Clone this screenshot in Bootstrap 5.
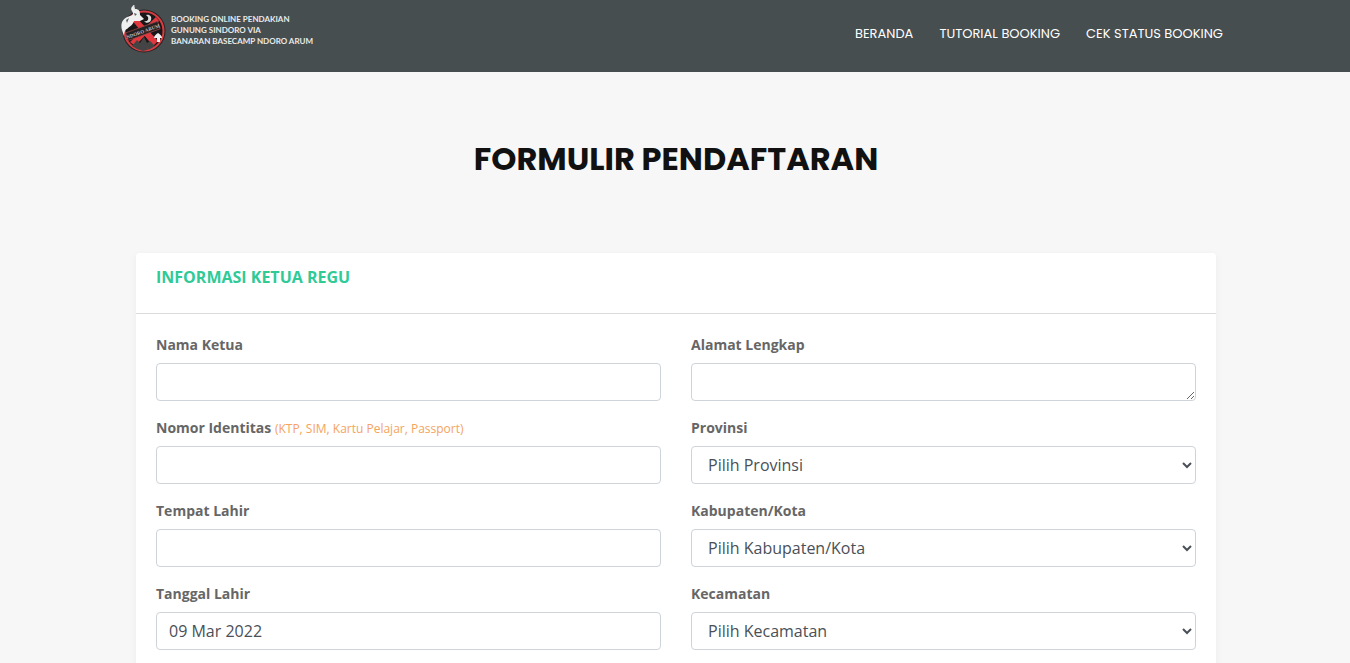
<!DOCTYPE html>
<html lang="id">
<head>
<meta charset="utf-8">
<meta name="viewport" content="width=device-width, initial-scale=1">
<title>Formulir Pendaftaran</title>
<link href="https://cdn.jsdelivr.net/npm/bootstrap@5.3.0/dist/css/bootstrap.min.css" rel="stylesheet">
<style>
  body { background: #f7f7f7; font-family: "Open Sans", sans-serif; color: #666; }
  .site-wrap { max-width: 1140px; padding-inline: 16px 14px; }
  .topbar { background: #464e50; height: 72px; }
  .brand-text { font: 700 8px/11px Lato, sans-serif; color: #e9eaea; margin: 14px 0 0 3px; }
  .main-menu { gap: 26px; padding: 24px 8px 0 0; }
  .main-menu a { font: 400 13px/20px Poppins, Inter, sans-serif; color: #fff; text-decoration: none; }
  .page-title { font: 700 32px/40px Poppins, Inter, sans-serif; color: #111; padding: 67px 0 74px; }
  .form-card { border: 0; border-radius: 4px; margin-inline: 15px; box-shadow: 0 2px 8px rgba(0,0,0,.05); }
  .form-card .card-header { background: #fff; border-color: #dadcde; padding: 12px 20px 24px; }
  .form-card h2 { font-size: 16px; line-height: 24px; font-weight: 700; color: #2fca96; }
  .form-card .card-body { padding: 20px; }
  .form-card .row { --bs-gutter-x: 30px; --bs-gutter-y: 16px; }
  label { display: block; font-size: 14px; line-height: 21px; font-weight: 700; margin-bottom: 8px; }
  .hint { font-size: 12px; line-height: 16px; font-weight: 400; color: #f4a460; }
  .form-card .form-control { height: 38px; min-height: 38px; border-color: #ced4da; border-radius: 4px; color: #495057; }
  select.form-control { appearance: auto; }
</style>
</head>
<body>
<header class="topbar">
  <div class="container site-wrap d-flex justify-content-between align-items-start">
    <a class="d-flex align-items-start text-decoration-none" href="#">
      <svg width="47" height="56" viewBox="0 0 47 56" aria-hidden="true">
        <circle cx="23" cy="31" r="21.5" fill="#252324"/>
        <circle cx="23" cy="31" r="19.5" fill="#191718" stroke="#d83d42" stroke-width="2"/>
        <path d="M10 19l5-2 22 24-5 5zM35 17l3 4-24 25-5-4z" fill="#e0383e"/>
        <path d="M1 30c-2-7 1-12 8-14 3-1 4-2 2-5-2-2 0-5 2-6l1 4c4 0 5 2 5 6l4 4-4 2-6 0c-1 4-4 5-7 8-2 0-3 4-3 7z" fill="#f0f0f0"/>
        <path d="M13 5c-1 2 0 4 1 5" fill="none" stroke="#ddd"/>
        <path d="M5 20l3-2-2 5zM13 13l3 1-2 2z" fill="#5e6465"/>
        <path d="M25 15c4-1 6 2 5 5s-5 4-7 1c3 1 5-1 4-4z" fill="#ddd"/>
        <path d="M11 46l5-6 3 3 4-6 3 6 3-2 5 5-5 3-7 2-6-2z" fill="#454444"/>
        <path d="M37 33c2 1 4 3 4 5h-2v4h-3v-4h-3c0-2 2-4 4-5z" fill="#f0f0f0"/>
        <g transform="rotate(-20 23 31)">
          <rect x="5" y="26.5" width="34" height="8" fill="#242122" stroke="#994649" stroke-width=".7"/>
          <text x="22" y="32.8" text-anchor="middle" font-family="Liberation Serif, serif" font-size="5" font-weight="700" fill="#c4bcbc">NDORO ARUM</text>
        </g>
      </svg>
      <span class="brand-text">BOOKING ONLINE PENDAKIAN<br>GUNUNG SINDORO VIA<br>BANARAN BASECAMP NDORO ARUM</span>
    </a>
    <nav class="main-menu d-flex" aria-label="Menu utama">
      <a href="#">BERANDA</a>
      <a href="#">TUTORIAL BOOKING</a>
      <a href="#">CEK STATUS BOOKING</a>
    </nav>
  </div>
</header>
<main class="container site-wrap">
  <h1 class="page-title text-center mb-0">FORMULIR PENDAFTARAN</h1>
  <form class="card form-card">
    <div class="card-header"><h2 class="mb-0">INFORMASI KETUA REGU</h2></div>
    <div class="card-body">
      <div class="row">
        <div class="col-md-6"><label for="nama">Nama Ketua</label><input id="nama" type="text" class="form-control"></div>
        <div class="col-md-6"><label for="alamat">Alamat Lengkap</label><textarea id="alamat" rows="1" class="form-control"></textarea></div>
        <div class="col-md-6"><label for="identitas">Nomor Identitas <span class="hint">(KTP, SIM, Kartu Pelajar, Passport)</span></label><input id="identitas" type="text" class="form-control"></div>
        <div class="col-md-6"><label for="provinsi">Provinsi</label><select id="provinsi" class="form-control"><option>Pilih Provinsi</option></select></div>
        <div class="col-md-6"><label for="tempat">Tempat Lahir</label><input id="tempat" type="text" class="form-control"></div>
        <div class="col-md-6"><label for="kota">Kabupaten/Kota</label><select id="kota" class="form-control"><option>Pilih Kabupaten/Kota</option></select></div>
        <div class="col-md-6"><label for="tanggal">Tanggal Lahir</label><input id="tanggal" type="text" class="form-control" value="09 Mar 2022"></div>
        <div class="col-md-6"><label for="kecamatan">Kecamatan</label><select id="kecamatan" class="form-control"><option>Pilih Kecamatan</option></select></div>
      </div>
    </div>
  </form>
</main>
<script src="https://cdn.jsdelivr.net/npm/bootstrap@5.3.0/dist/js/bootstrap.bundle.min.js"></script>
</body>
</html>
